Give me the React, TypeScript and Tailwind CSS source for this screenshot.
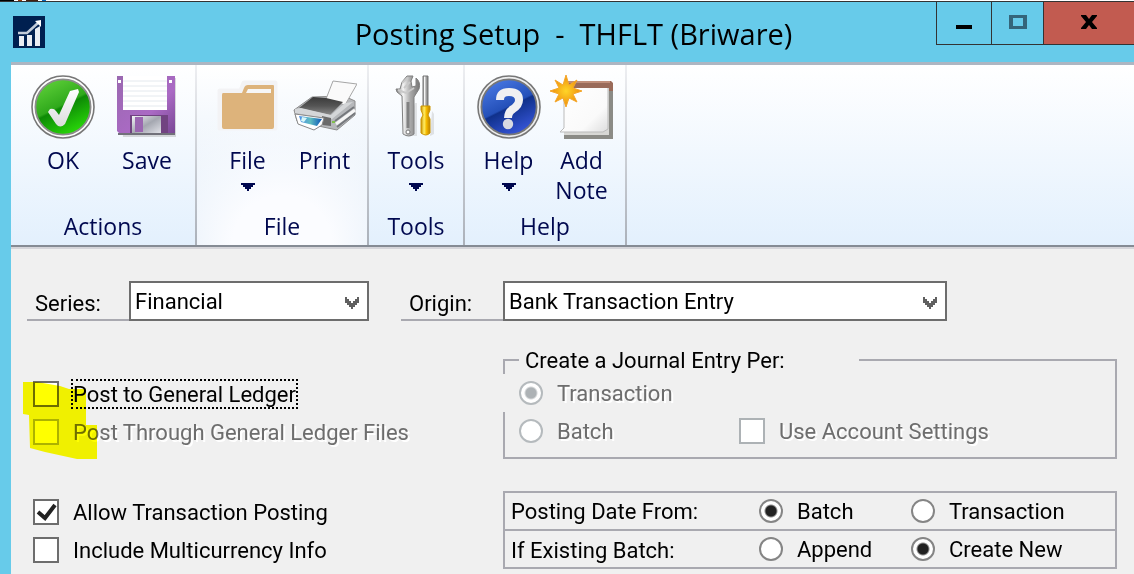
import type { ReactNode } from "react";

interface RibbonButtonProps {
  label: ReactNode;
  icon: ReactNode;
  width: string;
  menu?: boolean;
}

function RibbonButton({ label, icon, width, menu }: RibbonButtonProps) {
  return (
    <button type="button" className={`flex flex-col items-center ${width}`}>
      {icon}
      <span className="mt-1.5 leading-[30px]">{label}</span>
      {menu && (
        <svg className="mt-2 h-2 w-3.5" viewBox="0 0 14 8" fill="#00084f" aria-hidden="true">
          <path d="M0 0h14v2h-2v2h-2v2H8v2H6V6H4V4H2V2H0z" />
        </svg>
      )}
    </button>
  );
}

interface RibbonGroupProps {
  title: string;
  className: string;
  rowClassName?: string;
  children: ReactNode;
}

function RibbonGroup({ title, className, rowClassName = "", children }: RibbonGroupProps) {
  return (
    <>
      <section className={`flex h-[180px] flex-col justify-between pt-2.5 pb-1 ${className}`}>
        <div className={`flex justify-center ${rowClassName}`}>{children}</div>
        <h2 className="text-center leading-[30px]">{title}</h2>
      </section>
      <div className="w-0.5 shrink-0 bg-linear-to-b from-[#eeeff2] to-[#abb1ba]" />
    </>
  );
}

function OkIcon() {
  return (
    <svg className="h-16 w-16" viewBox="0 0 64 64" aria-hidden="true">
      <defs>
        <linearGradient id="okFill" x1="0.2" y1="0" x2="0.7" y2="1">
          <stop offset="0" stopColor="#5fd03a" />
          <stop offset="0.48" stopColor="#2fa91b" />
          <stop offset="0.52" stopColor="#0d8a05" />
          <stop offset="1" stopColor="#2bdc0a" />
        </linearGradient>
        <linearGradient id="okMark" x1="0" y1="0" x2="0" y2="1">
          <stop offset="0" stopColor="#fff" />
          <stop offset="1" stopColor="#dcdcdc" />
        </linearGradient>
      </defs>
      <circle cx="32" cy="32" r="31" fill="#fff" stroke="#777" strokeWidth="1.6" />
      <circle cx="32" cy="32" r="27.6" fill="url(#okFill)" stroke="#8b8b8b" strokeWidth="1.8" />
      <path d="M17 37l2-3q4-1 6 2l3 4L39 16l8-2 1 3-14 32q-5 5-9 0z" fill="url(#okMark)" />
    </svg>
  );
}

function SaveIcon() {
  return (
    <svg className="h-16 w-16" viewBox="0 0 64 64" aria-hidden="true">
      <defs>
        <linearGradient id="diskBody" x1="0" y1="0" x2="1" y2="1">
          <stop offset="0" stopColor="#9a68b0" />
          <stop offset="0.6" stopColor="#aa6ac4" />
          <stop offset="1" stopColor="#774693" />
        </linearGradient>
        <linearGradient id="diskShutter" x1="0" y1="0" x2="1" y2="1">
          <stop offset="0" stopColor="#f4f4f8" />
          <stop offset="0.5" stopColor="#a4a7b0" />
          <stop offset="1" stopColor="#e4e5eb" />
        </linearGradient>
      </defs>
      <path d="M5 3h56v59H8z" fill="#999" opacity="0.35" />
      <path d="M2 1h58v59H6l-4-4z" fill="url(#diskBody)" />
      <path d="M8 1h44v34H8z" fill="#fff" />
      <path d="M8 6h44M8 11h44M8 16h44M8 21h44M8 26h44M8 31h44" stroke="#e4e9ee" />
      <path d="M15 40h38v19H15z" fill="#714381" />
      <path d="M17 41h29v18H17z" fill="url(#diskShutter)" />
      <path d="M20 42h8v15h-8z" fill="#9b66b1" />
      <path d="M3 5h3v3H3zM54 5h3v3h-3z" fill="#fff" />
      <path d="M3 59h57" stroke="#71717a" strokeWidth="2" />
    </svg>
  );
}

function FolderIcon() {
  return (
    <svg className="h-16 w-16" viewBox="0 0 64 64" aria-hidden="true">
      <path d="M4 16h21l3-8h31v45H4z" fill="#f3f3f5" stroke="#f3f3f5" strokeWidth="5" strokeLinejoin="round" />
      <path
        d="M7 18h19l2-5q1-3 4-3h25q1 0 1 1v41q0 2-2 2H8q-2 0-2-2V20q0-2 1-2z"
        fill="#ddb37b"
      />
      <path d="M32 14h23v4H30z" fill="#f6f6f6" />
    </svg>
  );
}

function PrinterIcon() {
  return (
    <svg className="h-16 w-16" viewBox="0 0 64 64" aria-hidden="true">
      <defs>
        <linearGradient id="printTop" x1="0" y1="0" x2="0" y2="1">
          <stop offset="0" stopColor="#3a3a3a" />
          <stop offset="0.5" stopColor="#555" />
          <stop offset="1" stopColor="#8a8a8a" />
        </linearGradient>
        <linearGradient id="printTray" x1="0" y1="0" x2="1" y2="0">
          <stop offset="0" stopColor="#4d8fe8" />
          <stop offset="0.5" stopColor="#5fbcc0" />
          <stop offset="1" stopColor="#0a55b8" />
        </linearGradient>
      </defs>
      <path d="M1 35l18-13 32-1 11 5v14L44 55l-14-3-26-6z" fill="#b6b8bb" stroke="#8c8c8c" />
      <path d="M33 24l7-18 24 3-12 21z" fill="#fafafa" stroke="#a5a5a5" />
      <path d="M6 33l14-11 13 1 17 4-13 13z" fill="url(#printTop)" />
      <path d="M2 34l6-1 30 7 14-12 8-1-21 17-37-6z" fill="#d4d6d8" />
      <path d="M42 46l19-14M44 52l18-14" stroke="#75787c" strokeWidth="2" />
      <path d="M43 49l19-14" stroke="#f6f6f6" strokeWidth="3" />
      <path d="M29 41l9 2v8l-9-1z" fill="#6a6a6a" />
      <path d="M2 39l29 4-2 7-8 5-16-6z" fill="#fff" stroke="#888" />
      <path d="M6 41l23 3-5 7-16-4z" fill="url(#printTray)" />
      <path d="M9 42l5 1-3 4-3-1z" fill="#d8f7f8" />
      <path d="M39 47h3" stroke="#7ec04a" strokeWidth="2" />
    </svg>
  );
}

function ToolsIcon() {
  return (
    <svg className="h-16 w-16" viewBox="0 0 64 64" aria-hidden="true">
      <defs>
        <linearGradient id="steel" x1="0" y1="0" x2="1" y2="0">
          <stop offset="0" stopColor="#777" />
          <stop offset="0.3" stopColor="#f5f5f5" />
          <stop offset="0.6" stopColor="#aaa" />
          <stop offset="1" stopColor="#777" />
        </linearGradient>
        <linearGradient id="handle" x1="0" y1="0" x2="1" y2="0">
          <stop offset="0" stopColor="#c99000" />
          <stop offset="0.35" stopColor="#ffed65" />
          <stop offset="0.6" stopColor="#f6bb00" />
          <stop offset="1" stopColor="#bc7f00" />
        </linearGradient>
      </defs>
      <path d="M22 61h11V28h-2zM48 36l2 3v20l-4 2z" fill="#aaa" opacity="0.3" />
      <path
        d="M18 21l-5-4-1-3 4 0 2-7 5-6 6 0-2 5 1 6 4-1 0-8q5 4 3 11l-5 8v37q-5 4-11 0z"
        fill="url(#steel)"
        stroke="#808080"
      />
      <path d="M18 8l6-5M20 13l6-6M14 15l8 3 8-5" fill="none" stroke="#c9c9c9" strokeWidth="2" />
      <path d="M24 27v26" stroke="#818181" strokeWidth="3" />
      <circle cx="24" cy="57" r="2" fill="#fff" stroke="#777" />
      <path d="M39 1h5v31h-5z" fill="url(#steel)" stroke="#777" />
      <path d="M37 31h9v4l-2 5 2 4v14q-4 4-9 0V44l2-4-2-5z" fill="url(#handle)" stroke="#cc9500" />
    </svg>
  );
}

function HelpIcon() {
  return (
    <svg className="h-16 w-16" viewBox="0 0 64 64" aria-hidden="true">
      <defs>
        <linearGradient id="helpFill" x1="0.2" y1="0" x2="0.7" y2="1">
          <stop offset="0" stopColor="#4a79e4" />
          <stop offset="0.5" stopColor="#2450b9" />
          <stop offset="0.53" stopColor="#10318b" />
          <stop offset="1" stopColor="#3857dc" />
        </linearGradient>
      </defs>
      <circle cx="32" cy="32" r="31" fill="#eee" stroke="#777" strokeWidth="1.6" />
      <circle cx="32" cy="32" r="27.6" fill="url(#helpFill)" stroke="#777" strokeWidth="1.8" />
      <path d="M23 25q0-8 9-8 10 0 10 8 0 5-6 9-5 3-5 9" fill="none" stroke="#f0f0f2" strokeWidth="8" />
      <circle cx="31" cy="49" r="5.2" fill="#d8dae2" />
    </svg>
  );
}

function NoteIcon() {
  return (
    <svg className="h-16 w-16" viewBox="0 0 64 64" aria-hidden="true">
      <defs>
        <linearGradient id="notePaper" x1="0" y1="0" x2="1" y2="1">
          <stop offset="0" stopColor="#fff" />
          <stop offset="0.7" stopColor="#fafafa" />
          <stop offset="1" stopColor="#ddd" />
        </linearGradient>
        <radialGradient id="noteStar">
          <stop offset="0" stopColor="#ffd528" />
          <stop offset="1" stopColor="#ee8c0b" />
        </radialGradient>
      </defs>
      <path d="M14 10h49v54H14z" fill="#8b8b86" />
      <path d="M14 10h45v50H14z" fill="#d8d8d5" />
      <path d="M14 10h44v44l-5 3H10l4-4z" fill="url(#notePaper)" stroke="#bbb" />
      <path d="M15 6h46l2 2v8h-4v-3H15z" fill="#9a6b5a" />
      <path d="M15 7h45" stroke="#c08f7b" strokeWidth="2" />
      <path
        d="M16 0l3 10 8-5-4 8 9 3-9 3 4 8-8-4-3 9-3-9-8 4 4-8-9-3 9-3-4-8 8 5z"
        fill="url(#noteStar)"
        stroke="#f4a72b"
      />
    </svg>
  );
}

interface SelectBoxProps {
  id: string;
  value: string;
  className: string;
}

function SelectBox({ id, value, className }: SelectBoxProps) {
  return (
    <div className={`relative ${className}`}>
      <select
        id={id}
        defaultValue={value}
        className="h-10 w-full appearance-none border-2 border-[#6d6d6d] bg-white pr-9 pl-1 outline-none"
      >
        <option>{value}</option>
      </select>
      <svg
        className="pointer-events-none absolute top-4 right-2.5 h-3 w-3.5"
        viewBox="0 0 14 12"
        fill="#606060"
        aria-hidden="true"
      >
        <path d="M0 0h2v2h2v2h2v2h2V4h2V2h2V0h2v6h-2v2h-2v2H8v2H6v-2H4V8H2V6H0z" />
      </svg>
    </div>
  );
}

interface ChoiceProps {
  label: string;
  checked?: boolean;
  disabled?: boolean;
  focused?: boolean;
}

function CheckBox({ label, checked, disabled, focused }: ChoiceProps) {
  return (
    <label className={`flex h-[38px] items-center gap-3 ${disabled ? "text-[#6d6d6d] [text-shadow:2px_2px_0_#fff]" : ""}`}>
      <span className="relative">
        <input
          type="checkbox"
          defaultChecked={checked}
          disabled={disabled}
          className="peer block h-[26px] w-[26px] appearance-none border-2 border-[#6d6d6d] bg-white disabled:border-[#adb2b5]"
        />
        <svg
          className="pointer-events-none absolute inset-0 hidden h-[26px] w-[26px] peer-checked:block"
          viewBox="0 0 26 26"
          fill="none"
          stroke="#222"
          strokeWidth="4"
          aria-hidden="true"
        >
          <path d="M5 13l7 6L22 6" />
        </svg>
      </span>
      <span className={`border-2 border-dotted pt-0.5 leading-6 ${focused ? "border-black" : "border-transparent"}`}>
        {label}
      </span>
    </label>
  );
}

function Radio({ name, label, checked, disabled }: ChoiceProps & { name: string }) {
  return (
    <label
      className={`flex items-center gap-3.5 leading-6 ${disabled ? "text-[#6d6d6d] [text-shadow:2px_2px_0_#fff]" : ""}`}
    >
      <input
        type="radio"
        name={name}
        defaultChecked={checked}
        disabled={disabled}
        className="h-6 w-6 appearance-none rounded-full border-2 border-[#858585] bg-white checked:bg-[radial-gradient(circle,#222_5px,#fff_7px)] disabled:border-[#b5babd] disabled:checked:bg-[radial-gradient(circle,#adb2b5_5px,#fff_7px)]"
      />
      <span className="pt-0.5">{label}</span>
    </label>
  );
}

function TitleBar() {
  return (
    <header className="grid h-[61px] grid-cols-[1fr_auto_1fr] border-t border-[#333] pl-[13px]">
      <svg className="mt-3.5 h-8 w-8" viewBox="0 0 32 32" aria-hidden="true">
        <path d="M0 0h32v32H0z" fill="#002050" />
        <path d="M6 20h5v10H6zM14 19h5v11h-5zM22 13l5-3v20h-5z" fill="#e9edf3" />
        <path d="M5 17h9l11-10" fill="none" stroke="#c3ccd9" strokeWidth="2.5" />
        <path d="M22 5l6-1v7z" fill="#fff" />
      </svg>
      <h1 className="pt-2.5 font-['Open_Sans',sans-serif] text-[29px] leading-11 whitespace-pre">
        {"Posting Setup  -  THFLT (Briware)"}
      </h1>
      <div className="flex h-[43px] justify-self-end border-b border-l border-[#333]">
        <button type="button" aria-label="Minimize" className="flex w-[54px] justify-center">
          <span className="mt-[23px] h-1 w-4 bg-black" />
        </button>
        <button type="button" aria-label="Maximize" className="flex w-[52px] justify-center border-l border-[#333]">
          <span className="mt-[13px] h-3.5 w-[18px] border-x-4 border-y-3 border-[#34657a]" />
        </button>
        <button
          type="button"
          aria-label="Close"
          className="flex w-[91px] justify-center border-l border-[#333] bg-[#c25b50]"
        >
          <svg className="mt-[13px] h-3.5 w-4" viewBox="0 0 16 14" aria-hidden="true">
            <path d="M0 0h5l3 4 3-4h5v1l-5 6 5 6v1h-5l-3-4-3 4H0v-1l5-6-5-6z" />
          </svg>
        </button>
      </div>
    </header>
  );
}

function Ribbon() {
  return (
    <div className="flex border-t-3 border-b-2 border-t-[#adb6c2] border-b-[#858b94] bg-linear-to-b from-white to-[#e3f0fd] font-['Open_Sans',sans-serif] text-[23px] text-[#00084f]">
      <RibbonGroup title="Actions" className="w-[184px]" rowClassName="pl-1">
        <RibbonButton label="OK" icon={<OkIcon />} width="w-[84px]" />
        <RibbonButton label="Save" icon={<SaveIcon />} width="w-[84px]" />
      </RibbonGroup>
      <RibbonGroup
        title="File"
        className="w-[170px] bg-[radial-gradient(circle_at_50%_100%,#fbfcff_25%,#ffffff00_75%),linear-gradient(#fff,#dceaf8)]"
        rowClassName="pl-2"
      >
        <RibbonButton label="File" icon={<FolderIcon />} width="w-[77px]" menu />
        <RibbonButton label="Print" icon={<PrinterIcon />} width="w-[77px]" />
      </RibbonGroup>
      <RibbonGroup title="Tools" className="w-[94px]">
        <RibbonButton label="Tools" icon={<ToolsIcon />} width="w-[77px]" menu />
      </RibbonGroup>
      <RibbonGroup title="Help" className="w-[160px]">
        <RibbonButton label="Help" icon={<HelpIcon />} width="w-[73px]" menu />
        <RibbonButton
          label={
            <>
              Add
              <br />
              Note
            </>
          }
          icon={<NoteIcon />}
          width="w-[73px]"
        />
      </RibbonGroup>
    </div>
  );
}

export default function App() {
  return (
    <div className="flex min-h-screen flex-col bg-[#67cbea] text-black">
      {/* Sliver of the window behind */}
      <div className="flex h-px bg-white">
        <span className="w-3.5 bg-black" />
        <span className="ml-1 w-1 bg-[#913c12]" />
        <span className="ml-1 w-3 bg-[#452010]" />
        <span className="ml-1 w-1 bg-[#0867b8]" />
      </div>
      <TitleBar />
      <div className="ml-[11px] flex flex-1 flex-col bg-[#f0f0f0]">
        <Ribbon />
        <form className="grid grid-cols-[476px_minmax(0,1fr)] border-t-2 border-[#d5d5da] pt-8 pr-[17px] pb-1 pl-4 font-['Roboto',sans-serif] text-[22px]">
          <div className="flex h-10">
            <label htmlFor="series" className="w-[102px] border-b-2 border-[#a9a9b0] pt-1.5 pl-2">
              Series:
            </label>
            <SelectBox id="series" value="Financial" className="w-60" />
            <label htmlFor="origin" className="ml-8 flex-1 border-b-2 border-[#a9a9b0] pt-1.5 pl-2">
              Origin:
            </label>
          </div>
          <SelectBox id="origin" value="Bank Transaction Entry" className="max-w-[444px]" />

          {/* Ledger posting */}
          <div className="relative mt-[27px] pt-[27px] pl-1.5">
            <CheckBox label="Post to General Ledger" focused />
            <CheckBox label="Post Through General Ledger Files" disabled />
            <svg
              className="pointer-events-none absolute top-8 -left-1 h-20 w-[76px] mix-blend-multiply"
              viewBox="0 0 76 80"
              fill="#ff0"
              aria-hidden="true"
            >
              <path d="M0 2h14l23 4 9 3h17v36h11v34H54l-32-7-15-4-1-33-6-1z" />
            </svg>
          </div>
          <fieldset className="mt-[27px] h-[111px] border-2 border-[#a9a9b0]">
            <legend className="mb-0.5 ml-3.5 h-6 w-[340px] pl-1.5 leading-[26px]">Create a Journal Entry Per:</legend>
            <div className="-ml-0.5 flex h-[38px] items-center bg-[#f0f0f0] pl-4">
              <Radio name="journal" label="Transaction" checked disabled />
            </div>
            <div className="flex h-[38px] items-center pl-3.5">
              <div className="w-[220px]">
                <Radio name="journal" label="Batch" disabled />
              </div>
              <CheckBox label="Use Account Settings" disabled />
            </div>
          </fieldset>

          {/* Batch options */}
          <div className="mt-8 pt-0.5 pl-1.5">
            <CheckBox label="Allow Transaction Posting" checked />
            <CheckBox label="Include Multicurrency Info" />
          </div>
          <div className="mt-8 divide-y-2 divide-[#a9a9b0] border-2 border-[#a9a9b0]">
            <div role="radiogroup" aria-labelledby="posting-date" className="flex h-[38px] items-center pl-1.5">
              <span id="posting-date" className="w-[248px]">
                Posting Date From:
              </span>
              <div className="w-[152px]">
                <Radio name="posting-date" label="Batch" checked />
              </div>
              <Radio name="posting-date" label="Transaction" />
            </div>
            <div role="radiogroup" aria-labelledby="existing-batch" className="flex h-9 items-center pl-1.5">
              <span id="existing-batch" className="w-[248px] pt-0.5">
                If Existing Batch:
              </span>
              <div className="w-[152px]">
                <Radio name="existing-batch" label="Append" />
              </div>
              <Radio name="existing-batch" label="Create New" checked />
            </div>
          </div>
        </form>
      </div>
    </div>
  );
}
